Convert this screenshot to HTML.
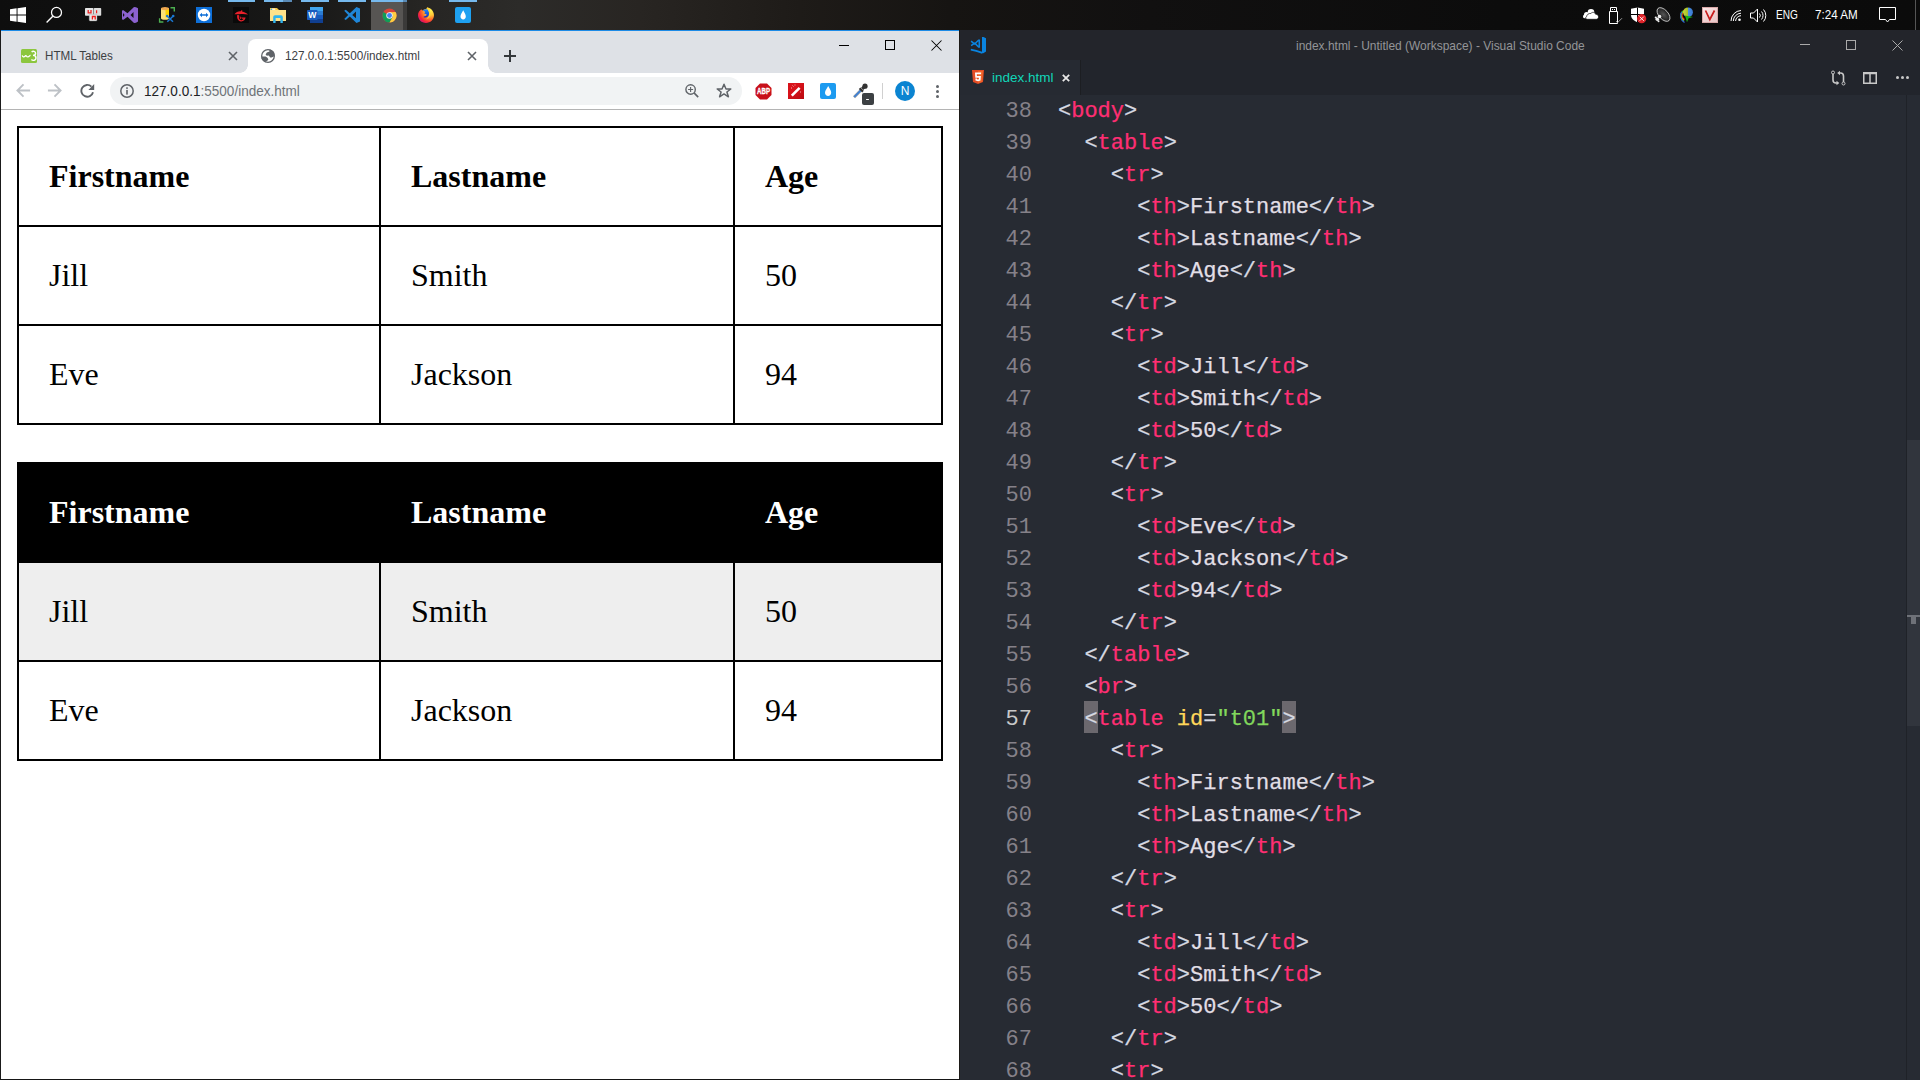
<!DOCTYPE html>
<html><head><meta charset="utf-8"><title>screen</title>
<style>
*{margin:0;padding:0;box-sizing:border-box}
html,body{width:1920px;height:1080px;overflow:hidden;background:#0e0e0e;font-family:"Liberation Sans",sans-serif}
.a{position:absolute}
#tb{left:0;top:0;width:1920px;height:30px;background:linear-gradient(90deg,#0e0e0e 0px,#111 160px,#1a1a19 320px,#262523 420px,#2c2b29 520px,#282522 640px,#1e1b18 800px,#161412 950px,#111010 1150px,#0c0c0c 1500px,#0b0b0b 1920px)}
#cr{left:0;top:30px;width:960px;height:1050px;background:#fff}
#vs{left:960px;top:30px;width:960px;height:1050px;background:#272b33;overflow:hidden}
/* page tables */
.pg{left:1px;top:80px;width:958px;height:969px;background:#fff;font-family:"Liberation Serif",serif;font-size:32px;color:#000}
table{border-collapse:collapse;width:924px;margin-left:16px;table-layout:fixed}
th,td{border:2px solid #000;padding:30px;text-align:left;height:99px}
th{font-weight:bold}
#t01 th{background:#000;color:#fff}
#t01 tr:nth-child(even){background:#eee}
/* code */
.code{left:0;top:0;width:960px;font-family:"Liberation Mono",monospace;font-size:22px;color:#e2dfe6}
.ln{position:absolute;left:0;width:72px;text-align:right;color:#858189;height:32px;line-height:32px}
.cl{position:absolute;left:98px;height:32px;line-height:32px;white-space:pre;-webkit-text-stroke:0.25px currentColor}
.p{color:#d6d9e2}.t{color:#ff2e73}.at{color:#ffd75a}.s{color:#82d85c}
</style></head><body>
<div id="tb" class="a"></div>
<!-- taskbar icons -->
<svg class="a" style="left:10px;top:7px" width="16" height="16" viewBox="0 0 17 17"><path d="M0 2.4L7 1.4V7.9H0ZM8 1.25L17 0V7.9H8ZM0 8.9H7V15.6L0 14.6ZM8 8.9H17V17L8 15.75Z" fill="#fff"/></svg>
<svg class="a" style="left:45px;top:6px" width="18" height="18" viewBox="0 0 18 18"><circle cx="11.5" cy="6.4" r="5" stroke="#fff" stroke-width="1.25" fill="none"/><path d="M7.8 10.2L1.6 16.4" stroke="#fff" stroke-width="1.4"/></svg>
<svg class="a" style="left:84px;top:7px" width="18" height="15" viewBox="0 0 18 15"><rect x="1" y="1" width="8.5" height="7.8" rx="0.8" fill="#e4e4e4"/><rect x="9.8" y="1" width="7.4" height="7.8" rx="0.8" fill="#dcdcdc"/><rect x="5.2" y="7.3" width="7.8" height="6.6" rx="0.8" fill="#e8e8e8" stroke="#999" stroke-width="0.4"/><path d="M4.2 3V5.9H7V3" stroke="#ee2020" stroke-width="1.3" fill="none"/><path d="M12.6 3.3V6.3" stroke="#ee2020" stroke-width="1.2"/><path d="M8.4 12.4V9.5H11.2V12.4" stroke="#ee2020" stroke-width="1.3" fill="none"/></svg>
<svg class="a" style="left:118px;top:4px" width="24" height="24" viewBox="0 0 24 24"><path fill-rule="evenodd" d="M4 6.5L5.5 6.2L9.5 9.2L16 3L18 3.3L20 4.3V17.5L18 18.7L16 19L9.5 12.8L5.5 15.8L4 15.5ZM5 9L5 13L6.6 11ZM12.5 11L15.5 8V14Z" fill="#8c62d0"/></svg>
<svg class="a" style="left:158px;top:6px" width="18" height="18" viewBox="0 0 18 18"><path d="M3 2.2H11V12.2C11 13.2 9.2 13.8 7 13.8C4.8 13.8 3 13.2 3 12.2Z" fill="#fde27a"/><path d="M7.5 2.5H11V8.5L8.5 11.5H7.5Z" fill="#ffd400"/><ellipse cx="7" cy="2.6" rx="4" ry="1.6" fill="#f0a850"/><path d="M12.5 1.8H16.3V5.6M1.6 12.2V16H5.4" stroke="#4caf50" stroke-width="1.4" fill="none"/><path d="M9.3 10.2L15 15.8M15 10.2L9.3 15.8" stroke="#1a78d4" stroke-width="1.5"/><circle cx="9.2" cy="10" r="1.3" fill="#1a78d4"/><circle cx="15.2" cy="10" r="1.3" fill="#1a78d4"/></svg>
<div class="a" style="left:196px;top:7px;width:16px;height:16px;background:#0e6fd8"></div>
<svg class="a" style="left:196px;top:7px" width="16" height="16" viewBox="0 0 16 16"><circle cx="8" cy="8" r="6.2" fill="#fff"/><path d="M3.6 8L6 5.8V7.2H10V5.8L12.4 8L10 10.2V8.8H6V10.2Z" fill="#0e6fd8"/></svg>
<div class="a" style="left:233px;top:7px;width:16px;height:16px;background:#0a0a0a"></div>
<svg class="a" style="left:233px;top:7px" width="16" height="16" viewBox="0 0 16 16"><path d="M1.5 7.2C3 5 5.5 4 8 4.3L8.6 3L9.4 3.6L9 4.4C11.5 4.8 13.5 6 15 7.5C12.5 7 10.5 6.8 8.2 7C5.5 7.2 3.2 7.5 1.5 7.2Z" fill="#e8202a"/><path d="M4.2 8C3.6 11 5 14.2 8 14.4C10.4 14.6 12.3 12.8 12.6 10.6H8L9 11.8H10.6C10.2 12.8 9.2 13.3 8.2 13.2C6.2 13 5.4 10.5 6.2 8.2Z" fill="#e8202a"/><path d="M7 9.5L7.6 11.8" stroke="#e8202a" stroke-width="1"/></svg>
<svg class="a" style="left:270px;top:7px" width="17" height="16" viewBox="0 0 17 16"><path d="M0 1H7L9 3H16V14H0Z" fill="#f6c744"/><rect x="1.3" y="1.6" width="4" height="1.2" fill="#fff"/><circle cx="1.5" cy="2.2" r="0.8" fill="#35a8e8"/><rect x="0" y="3" width="16" height="11" fill="#ffe28a"/><path d="M3.2 16V10Q3.2 8.2 5 8.2H11Q12.8 8.2 12.8 10V16H10.4V11H5.6V16Z" fill="#31b4ee"/></svg>
<svg class="a" style="left:307px;top:6px" width="17" height="18" viewBox="0 0 17 18"><rect x="3" y="1" width="13" height="4" fill="#41a5ee"/><rect x="3" y="5" width="13" height="4" fill="#2b7cd3"/><rect x="3" y="9" width="13" height="4" fill="#185abd"/><rect x="3" y="13" width="13" height="4" fill="#103f91"/><rect x="0" y="4" width="10.5" height="10" rx="0.8" fill="#1a5cc0"/><text x="5.25" y="12.3" text-anchor="middle" font-family="Liberation Sans" font-weight="bold" font-size="8.6" fill="#fff">W</text></svg>
<svg class="a" style="left:340px;top:4px" width="24" height="24" viewBox="0 0 24 24"><path fill-rule="evenodd" d="M4.2 6.8L5.8 5.8L9.8 9.2L16.5 3L20 4.5V17.5L16.5 19L9.8 12.6L5.8 16L4.2 15L8.2 10.9ZM16 7.5V14.3L12.2 10.9Z" fill="#1f86d8"/></svg>
<div class="a" style="left:371px;top:2px;width:32px;height:28px;background:#575553"></div>
<div class="a" style="left:403px;top:2px;width:4px;height:28px;background:#3b3a39"></div>
<svg class="a" style="left:382px;top:8px" width="15" height="15" viewBox="0 0 16 16"><circle cx="8" cy="8" r="7.5" fill="#db4437"/><path d="M8 8L1.5 4.25A7.5 7.5 0 0 0 8 15.5L11.75 9Z" fill="#0f9d58"/><path d="M8 8L11.75 9L8 15.5A7.5 7.5 0 0 0 14.5 4.25L8 4.5Z" fill="#ffcd40"/><circle cx="8" cy="8" r="3.4" fill="#f1f1f1"/><circle cx="8" cy="8" r="2.6" fill="#4285f4"/></svg>
<svg class="a" style="left:417px;top:6px" width="18" height="18" viewBox="0 0 18 18"><defs><radialGradient id="ff" cx="0.78" cy="0.22" r="0.95"><stop offset="0" stop-color="#fff44f"/><stop offset="0.3" stop-color="#ffc93a"/><stop offset="0.58" stop-color="#ff6a2a"/><stop offset="0.8" stop-color="#f5223a"/><stop offset="1" stop-color="#c8128a"/></radialGradient><linearGradient id="fb" x1="0" y1="0" x2="0" y2="1"><stop offset="0" stop-color="#1e8bff"/><stop offset="1" stop-color="#1a2fb8"/></linearGradient></defs><path d="M4.3 3.2L5.2 4.6C6.3 3.6 7.8 3 9.2 2.9L10.2 1.2C14 2 17 5.2 17 9.3C17 13.7 13.4 17 9 17C4.6 17 1 13.4 1 9C1 6.7 2.3 4.5 4.3 3.2Z" fill="url(#ff)"/><path d="M6 4.3C7.5 3.2 9.5 3 10.6 3.6C11.8 5 12.6 7.2 11.8 9.2C11 11 9 11.8 7.2 11.5C6.4 11.2 6.2 10.6 7 10.4C8.5 10.2 9.8 9.6 9.6 8.6C9.4 7.8 8 8 7.2 7.4C7.8 6.6 8.2 6 7.8 5.4C7.2 5.2 6.6 5.2 6 4.3Z" fill="url(#fb)"/><path d="M10.2 1.3C12.3 3 13.6 5.5 13.4 8.5C13.2 11.5 11 13.2 8.5 13.2C10.8 12.6 12.3 10.8 12.2 8.4C12.1 5.8 11.2 3.4 10.2 1.3Z" fill="#ffd43a" opacity="0.85"/></svg>
<div class="a" style="left:455px;top:7px;width:16px;height:16px;background:#1ea1f1;border-radius:2px"></div>
<svg class="a" style="left:455px;top:7px" width="16" height="16" viewBox="0 0 16 16"><path d="M8.2 3.2C7 5.8 5.5 7.5 5.5 9.5C5.5 11.2 6.7 12.4 8.2 12.4C9.7 12.4 10.8 11.2 10.8 9.5C10.8 7.5 9.4 5.8 8.2 3.2Z" fill="#fff"/></svg>
<div class="a" style="left:228px;top:0;width:27px;height:2px;background:#76b9ed"></div>
<div class="a" style="left:264px;top:0;width:28px;height:2px;background:#76b9ed"></div>
<div class="a" style="left:283px;top:0;width:9px;height:2px;background:#5a8ab5"></div>
<div class="a" style="left:301px;top:0;width:28px;height:2px;background:#76b9ed"></div>
<div class="a" style="left:338px;top:0;width:28px;height:2px;background:#76b9ed"></div>
<div class="a" style="left:371px;top:0;width:32px;height:2px;background:#76b9ed"></div>
<div class="a" style="left:403px;top:0;width:4px;height:2px;background:#5a8ab5"></div>
<div class="a" style="left:449px;top:0;width:28px;height:2px;background:#76b9ed"></div>
<!-- tray -->
<svg class="a" style="left:1582px;top:8px" width="17" height="12" viewBox="0 0 17 12"><g fill="#fff"><circle cx="9" cy="4.3" r="3.3"/><circle cx="4.6" cy="6.6" r="2.6"/><rect x="1" y="6.5" width="8" height="3.8" rx="1.9"/></g><g fill="#fff" stroke="#0c0c0c" stroke-width="0.7"><path d="M5 11.3C3.5 11.3 3 9.2 4.6 8.6C4.8 6.6 6.6 5.2 8.8 5.5C9.8 3.9 12.6 3.8 13.6 6.2C15.6 6.1 16.8 7.6 16.5 9.3C16.3 10.6 15.4 11.3 14.3 11.3Z"/></g></svg>
<svg class="a" style="left:1608px;top:6px" width="16" height="18" viewBox="0 0 16 18"><path d="M2.5 1.5H8.5V5.5H2.5ZM1.5 5.5H9.5V17.5H1.5Z" stroke="#fff" stroke-width="1" fill="none"/><rect x="4" y="3" width="1" height="1" fill="#fff"/><rect x="6" y="3" width="1" height="1" fill="#fff"/><path d="M8 15.2L9.6 16.6L14 12.2" stroke="#aaa" stroke-width="0.9" fill="none"/></svg>
<svg class="a" style="left:1630px;top:7px" width="17" height="17" viewBox="0 0 17 17"><path d="M1 1.8L7.5 0.6L14 1.8V8C14 11.5 11 13.8 7.5 15.2C4 13.8 1 11.5 1 8Z" fill="#fff"/><path d="M7.5 0.5V15.5M1 7.5H14" stroke="#000" stroke-width="1"/><circle cx="11.7" cy="11.7" r="4.6" fill="#e0242a"/><path d="M9.6 9.6L13.8 13.8M13.8 9.6L9.6 13.8" stroke="#fff" stroke-width="0.9"/></svg>
<svg class="a" style="left:1653px;top:6px" width="18" height="17" viewBox="0 0 18 17"><defs><radialGradient id="dg" cx="0.5" cy="0.5" r="0.6"><stop offset="0" stop-color="#555"/><stop offset="1" stop-color="#111"/></radialGradient></defs><ellipse cx="10.5" cy="8.5" rx="4.6" ry="8.2" transform="rotate(-42 10.5 8.5)" stroke="#ddd" stroke-width="0.8" fill="url(#dg)"/><g fill="#eee"><circle cx="6.5" cy="10.5" r="1.8"/><circle cx="4.3" cy="13.3" r="1.8"/><circle cx="2.8" cy="11.5" r="1.1"/><circle cx="5.5" cy="15.2" r="1"/></g></svg>
<svg class="a" style="left:1677px;top:7px" width="17" height="16" viewBox="0 0 17 16"><defs><linearGradient id="ig" x1="0" y1="0" x2="1" y2="0"><stop offset="0" stop-color="#c8d838"/><stop offset="0.45" stop-color="#a8c030"/><stop offset="0.55" stop-color="#4a90e0"/><stop offset="1" stop-color="#3a78d0"/></linearGradient></defs><path d="M8 4.2A4.5 4.5 0 0 0 7.5 12.5" stroke="#e03818" stroke-width="1.2" fill="none"/><path d="M6.8 3.8A5.6 5.6 0 0 0 7 13.6" stroke="#e8d020" stroke-width="1.2" fill="none"/><path d="M5.8 4A6.8 6.8 0 0 0 7 14.6" stroke="#38c030" stroke-width="1.2" fill="none"/><path d="M4.6 5A7.8 7.8 0 0 0 7.5 15.5" stroke="#3060d8" stroke-width="1.2" fill="none"/><circle cx="11" cy="5.3" r="4.9" fill="url(#ig)"/><path d="M8 8.5L16 10L11.6 11.2L10 15.2Z" fill="#18b018"/></svg>
<div class="a" style="left:1702px;top:7px;width:16px;height:16px;background:linear-gradient(135deg,#fbe8e8,#f0d0d0 60%,#e8c8c8);border:1px solid #d8a8a8"></div>
<svg class="a" style="left:1702px;top:7px" width="16" height="16" viewBox="0 0 16 16"><path d="M3.5 3.5L7.8 12.5L12.5 3.5" stroke="#c81c1c" stroke-width="1.7" fill="none"/></svg>
<svg class="a" style="left:1730px;top:9px" width="12" height="13" viewBox="0 0 12 13"><path d="M1 12A10.5 10.5 0 0 1 11 1.5M3.3 12A8 8 0 0 1 11 4.2M5.6 12A5.5 5.5 0 0 1 11 6.7" stroke="#fff" stroke-width="1" fill="none"/><circle cx="9.5" cy="10.8" r="1.3" fill="#fff"/></svg>
<svg class="a" style="left:1750px;top:8px" width="17" height="15" viewBox="0 0 17 15"><path d="M0.5 5H3.5L7.5 1V14L3.5 10H0.5Z" stroke="#fff" stroke-width="1" fill="none"/><path d="M9.5 5.5A3 3 0 0 1 9.5 9.5M11.5 3.5A6 6 0 0 1 11.5 11.5M13.5 1.5A9 9 0 0 1 13.5 13.5" stroke="#fff" stroke-width="1" fill="none"/></svg>
<div class="a" style="left:1776px;top:7px;font-size:12px;color:#fff;line-height:17px;white-space:nowrap;transform:scaleX(0.84);transform-origin:0 0">ENG</div>
<div class="a" style="left:1815px;top:7px;font-size:12px;color:#fff;line-height:17px;white-space:nowrap;transform:scaleX(0.97);transform-origin:0 0">7:24 AM</div>
<svg class="a" style="left:1879px;top:7px" width="17" height="16" viewBox="0 0 17 16"><path d="M0.5 0.5H16.5V12.5H10.5L8.5 15L6.5 12.5H0.5Z" stroke="#fff" stroke-width="1" fill="none"/></svg>
<div class="a" style="left:1915px;top:0;width:1px;height:30px;background:#555"></div>

<div id="cr" class="a">
  <div class="a" style="left:0;top:0;width:1px;height:1050px;background:#1a1a1a"></div>
  <div class="a" style="left:959px;top:0;width:1px;height:1050px;background:#1d1a17"></div>
  <div class="a" style="left:0;top:1049px;width:960px;height:1px;background:#161616;z-index:5"></div>
  <div class="a" style="left:1px;top:0;width:958px;height:1px;background:#1c8ae6"></div>
  <div class="a" style="left:1px;top:1px;width:958px;height:42px;background:#dee1e6"></div>
  <div class="a" style="left:1px;top:43px;width:958px;height:36px;background:#fff"></div>
  <div class="a" style="left:1px;top:79px;width:958px;height:1px;background:#b4b4b4"></div>

  <!-- tab strip content (coords relative to #cr, top=30) -->
  <svg class="a" style="left:21px;top:19px" width="16" height="14" viewBox="0 0 16 14"><rect width="16" height="14" rx="1.5" fill="#8cc63e"/><path d="M1.2 6.3C1.6 8 3 8.3 4 7.3C4.6 6.7 5 6.3 5.4 7C6 8.2 7.5 8.2 8.3 7.2C8.7 6.7 9 6.2 9.6 6.3" stroke="#fff" stroke-width="1.3" fill="none"/><path d="M10.6 3C11.8 1.8 14.6 2.2 14.6 4.3C14.6 5.8 13.2 6.4 12 6.4C13.6 6.4 15 7.2 15 9C15 11.6 11.8 12 10.4 10.6" stroke="#fff" stroke-width="1.4" fill="none"/></svg>
  
  <div class="a" style="left:45px;top:17px;font-size:12.5px;color:#3c4043;line-height:18px;white-space:nowrap;transform:scaleX(0.93);transform-origin:0 0">HTML Tables</div>
  <svg class="a" style="left:228px;top:21px" width="10" height="10" viewBox="0 0 10 10"><path d="M1 1L9 9M9 1L1 9" stroke="#5f6368" stroke-width="1.6"/></svg>
  <!-- active tab -->
  <div class="a" style="left:248px;top:9px;width:240px;height:34px;background:#fff;border-radius:8px 8px 0 0"></div>
  <div class="a" style="left:240px;top:35px;width:8px;height:8px;background:radial-gradient(circle at 0 0,#dee1e6 7.5px,#fff 8px)"></div>
  <div class="a" style="left:488px;top:35px;width:8px;height:8px;background:radial-gradient(circle at 100% 0,#dee1e6 7.5px,#fff 8px)"></div>
  <svg class="a" style="left:261px;top:19px" width="14" height="14" viewBox="0 0 14 14"><circle cx="7" cy="7" r="6.35" fill="none" stroke="#5f6368" stroke-width="1.3"/><path d="M8.3 0.6L8.5 2.5L5.8 3.6L4.6 5.6L5.8 6.8L7.8 6.6L9.2 8.4L10.6 8.6L12.8 7.4L13.6 6L13 3L10.5 1Z" fill="#5f6368"/><path d="M0.5 7.6L4.5 7.6L6.2 8.4L7.4 10.2L6.4 11.8L4.4 12.4L4.3 13.6L2 11.8L0.6 9.5Z" fill="#5f6368"/></svg>
  <div class="a" style="left:285px;top:17px;font-size:12.5px;color:#3c4043;line-height:18px;white-space:nowrap;transform:scaleX(0.937);transform-origin:0 0">127.0.0.1:5500/index.html</div>
  <svg class="a" style="left:467px;top:21px" width="10" height="10" viewBox="0 0 10 10"><path d="M1 1L9 9M9 1L1 9" stroke="#5f6368" stroke-width="1.6"/></svg>
  <svg class="a" style="left:504px;top:20px" width="12" height="12" viewBox="0 0 12 12"><path d="M6 0V12M0 6H12" stroke="#33373a" stroke-width="2"/></svg>
  <!-- window controls -->
  <div class="a" style="left:839px;top:15px;width:10px;height:1px;background:#000"></div>
  <div class="a" style="left:885px;top:10px;width:10px;height:10px;border:1px solid #000"></div>
  <svg class="a" style="left:931px;top:10px" width="11" height="11" viewBox="0 0 11 11"><path d="M0.5 0.5L10.5 10.5M10.5 0.5L0.5 10.5" stroke="#000" stroke-width="1.05"/></svg>
  <!-- toolbar -->
  <svg class="a" style="left:16px;top:53px" width="15" height="15" viewBox="0 0 16 16"><path d="M15 8H2M8 1.5L1.5 8L8 14.5" stroke="#bdc1c6" stroke-width="2" fill="none"/></svg>
  <svg class="a" style="left:47px;top:53px" width="15" height="15" viewBox="0 0 16 16"><path d="M1 8H14M8 1.5L14.5 8L8 14.5" stroke="#bdc1c6" stroke-width="2" fill="none"/></svg>
  <svg class="a" style="left:80px;top:53px" width="15" height="15" viewBox="0 0 15 15"><path d="M13 9.2A5.9 5.9 0 1 1 11.4 3.6" stroke="#5f6368" stroke-width="1.9" fill="none"/><path d="M8.4 6.9H14.2V1.1Z" fill="#5f6368"/></svg>
  <div class="a" style="left:110px;top:47px;width:632px;height:28px;background:#f1f3f4;border-radius:14px"></div>
  <svg class="a" style="left:120px;top:54px" width="14" height="14" viewBox="0 0 14 14"><circle cx="7" cy="7" r="6.2" stroke="#5f6368" stroke-width="1.5" fill="none"/><rect x="6.2" y="5.9" width="1.6" height="4.7" fill="#5f6368"/><rect x="6.2" y="3.3" width="1.6" height="1.6" fill="#5f6368"/></svg>
  <div class="a" style="left:144px;top:52px;font-size:14.5px;color:#202124;line-height:18px;white-space:nowrap;transform:scaleX(0.934);transform-origin:0 0">127.0.0.1<span style="color:#6f7378">:5500/index.html</span></div>
  <svg class="a" style="left:685px;top:54px" width="15" height="15" viewBox="0 0 15 15"><circle cx="5.6" cy="5.5" r="4.7" stroke="#5f6368" stroke-width="1.4" fill="none"/><path d="M9 8.9L13.2 13.1" stroke="#5f6368" stroke-width="1.6"/><path d="M5.6 3V8M3.1 5.5H8.1" stroke="#5f6368" stroke-width="1.1"/></svg>
  <svg class="a" style="left:716px;top:53px" width="16" height="15" viewBox="0 0 16 15"><path d="M8 1.3L10 6H14.8L10.9 9L12.4 13.8L8 10.9L3.6 13.8L5.1 9L1.2 6H6Z" stroke="#5f6368" stroke-width="1.5" fill="none" stroke-linejoin="round"/></svg>
  <svg class="a" style="left:755px;top:53px" width="17" height="17" viewBox="0 0 17 17"><path d="M5 0.5H12L16.5 5V12L12 16.5H5L0.5 12V5Z" fill="#c8101a"/><text x="2" y="11.4" textLength="13" lengthAdjust="spacingAndGlyphs" font-family="Liberation Sans" font-weight="bold" font-size="8.4" fill="#fff" stroke="#fff" stroke-width="0.3">ABP</text></svg>
  <div class="a" style="left:788px;top:53px;width:16px;height:16px;background:linear-gradient(135deg,#d8121a 40%,#b80a10)"></div>
  <svg class="a" style="left:788px;top:53px" width="16" height="16" viewBox="0 0 16 16"><path d="M3.8 12.6L11.6 4.8" stroke="#fff" stroke-width="2.6"/><path d="M4.5 2.5L5.5 3.5M7 1.5V2.5M3 5H4M12.5 8.5V9.5" stroke="#f4c0c0" stroke-width="0.9"/></svg>
  <div class="a" style="left:820px;top:53px;width:16px;height:16px;background:#1d9bf0;border-radius:2px"></div>
  <svg class="a" style="left:820px;top:53px" width="16" height="16" viewBox="0 0 16 16"><path d="M8.2 3C7 5.6 5 7.4 5 9.8C5 11.6 6.4 13 8.1 13C9.8 13 11.2 11.6 11.2 9.8C11.2 7.4 9.4 5.6 8.2 3Z" fill="#fff"/></svg>
  <svg class="a" style="left:852px;top:53px" width="17" height="16" viewBox="0 0 17 16"><path d="M2 14.2L9.2 7" stroke="#9aa0a6" stroke-width="3"/><path d="M2.3 13.9L8.8 7.4" stroke="#3b7fd6" stroke-width="1.6"/><path d="M7.6 5.2L11 8.6" stroke="#333" stroke-width="2.2"/><path d="M10.2 5.8L12.2 3.8" stroke="#333" stroke-width="3.2"/><circle cx="13" cy="3.2" r="2.6" fill="#333"/></svg>
  <div class="a" style="left:862px;top:63px;width:12px;height:12px;background:#3c4043;border-radius:2px"></div>
  <div class="a" style="left:866px;top:68.5px;width:3px;height:1.5px;background:#fff;border-radius:1px"></div>
  <div class="a" style="left:882px;top:53px;width:1px;height:16px;background:#d0d0d0"></div>
  <div class="a" style="left:895px;top:51px;width:20px;height:20px;background:#0b84d1;border-radius:50%;color:#fff;font-size:12px;line-height:20px;text-align:center">N</div>
  <div class="a" style="left:936px;top:55px;width:3px;height:3px;background:#5f6368;border-radius:50%"></div>
  <div class="a" style="left:936px;top:60px;width:3px;height:3px;background:#5f6368;border-radius:50%"></div>
  <div class="a" style="left:936px;top:65px;width:3px;height:3px;background:#5f6368;border-radius:50%"></div>
  <div class="a pg">
    <table style="margin-top:16px">
      <colgroup><col style="width:362px"><col style="width:354px"><col style="width:208px"></colgroup>
      <tr><th>Firstname</th><th>Lastname</th><th>Age</th></tr>
      <tr><td>Jill</td><td>Smith</td><td>50</td></tr>
      <tr><td>Eve</td><td>Jackson</td><td>94</td></tr>
    </table>
    <table id="t01" style="margin-top:37px">
      <colgroup><col style="width:362px"><col style="width:354px"><col style="width:208px"></colgroup>
      <tr><th>Firstname</th><th>Lastname</th><th>Age</th></tr>
      <tr><td>Jill</td><td>Smith</td><td>50</td></tr>
      <tr><td>Eve</td><td>Jackson</td><td>94</td></tr>
    </table>
  </div>
</div>
<div id="vs" class="a">
  <div class="a" style="left:0;top:0;width:960px;height:30px;background:#23252b"></div>
  <div class="a" style="left:0;top:30px;width:960px;height:35px;background:#22252c"></div>
  <div class="a" style="left:0;top:30px;width:120px;height:35px;background:#262a32"></div>
  <div class="a" style="left:120px;top:30px;width:1px;height:35px;background:#1c1e22"></div>

  <!-- VS Code title bar -->
  <svg class="a" style="left:6px;top:4px" width="24" height="24" viewBox="0 0 24 24"><path d="M5.1 7.2L9 10.3M5.1 11.6L9 8.8" stroke="#0a84e0" stroke-width="1.5"/><path fill-rule="evenodd" d="M8 9.5L12.3 5.4H14V13.8H12.3ZM10.2 9.5L12.5 7.3V11.8Z" fill="#0a84e0"/><path d="M16 3L17.5 3L20 4.3V17.6L17.3 19.2L16 19Z" fill="#0a84e0"/><path d="M4.8 15.6C9 16.2 13 17.5 16.5 18.8" stroke="#0a84e0" stroke-width="1.9" fill="none"/></svg>
  <div class="a" style="left:336px;top:7px;font-size:13px;color:#949598;line-height:18px;white-space:nowrap;transform:scaleX(0.92);transform-origin:0 0">index.html - Untitled (Workspace) - Visual Studio Code</div>
  <div class="a" style="left:840px;top:14px;width:10px;height:1px;background:#aaa"></div>
  <div class="a" style="left:886px;top:10px;width:10px;height:10px;border:1px solid #aaa"></div>
  <svg class="a" style="left:932px;top:10px" width="11" height="11" viewBox="0 0 11 11"><path d="M0.5 0.5L10.5 10.5M10.5 0.5L0.5 10.5" stroke="#aaa" stroke-width="1"/></svg>
  <!-- tab -->
  <svg class="a" style="left:12px;top:40px" width="12" height="14" viewBox="0 0 12 14"><path d="M0 0H12L11 12L6 14L1 12Z" fill="#e44d26"/><path d="M6 1V13L10 11.8L10.9 1Z" fill="#f16529"/><path d="M3 2.5H9.2L9 4.3H4.8L4.9 6H8.9L8.5 10.4L6 11.2L3.5 10.4L3.4 8.6H5L5.1 9.3L6 9.6L6.9 9.3L7 7.7H3.3Z" fill="#fff"/></svg>
  <div class="a" style="left:32px;top:39px;font-size:13.5px;color:#11d6b8;line-height:18px;white-space:nowrap">index.html</div>
  <svg class="a" style="left:102px;top:44px" width="8" height="8" viewBox="0 0 8 8"><path d="M0.8 0.8L7.2 7.2M7.2 0.8L0.8 7.2" stroke="#e8e8e8" stroke-width="1.8"/></svg>
  <!-- editor actions -->
  <svg class="a" style="left:871px;top:40px" width="15" height="17" viewBox="0 0 15 17"><circle cx="2" cy="2.5" r="1.5" stroke="#c8c8c8" stroke-width="1" fill="none"/><circle cx="12.5" cy="13.5" r="1.5" stroke="#c8c8c8" stroke-width="1" fill="none"/><path d="M2 4V10C2 12 3 13 5 13H6" stroke="#c8c8c8" stroke-width="1.6" fill="none"/><path d="M5.5 10.8L8.3 13L5.5 15.2Z" fill="#c8c8c8"/><path d="M12.5 12V6C12.5 4 11.5 3 9.5 3H8.5" stroke="#c8c8c8" stroke-width="1.6" fill="none"/><path d="M9 0.8L6.2 3L9 5.2Z" fill="#c8c8c8"/></svg>
  <svg class="a" style="left:903px;top:42px" width="14" height="12" viewBox="0 0 14 12"><rect x="0.75" y="0.75" width="12.5" height="10.5" stroke="#c8c8c8" stroke-width="1.5" fill="none"/><path d="M7 1V11M1 1.6H13" stroke="#c8c8c8" stroke-width="1.5"/></svg>
  <div class="a" style="left:936px;top:46px;width:3px;height:3px;border-radius:50%;background:#c8c8c8"></div>
  <div class="a" style="left:941px;top:46px;width:3px;height:3px;border-radius:50%;background:#c8c8c8"></div>
  <div class="a" style="left:946px;top:46px;width:3px;height:3px;border-radius:50%;background:#c8c8c8"></div>
  <!-- scrollbar -->
  <div class="a" style="left:946px;top:65px;width:1px;height:985px;background:#1f2228"></div>
  <div class="a" style="left:947px;top:410px;width:13px;height:286px;background:#31353d"></div>
  <div class="a" style="left:947px;top:585px;width:13px;height:2px;background:#6e7178"></div>
  <div class="a" style="left:951px;top:587px;width:5px;height:7px;background:#6e7178"></div>
  <!-- bracket match boxes line 57 -->
  <div class="a" style="left:124px;top:671px;width:14px;height:32px;background:#6b686e"></div>
  <div class="a" style="left:322px;top:671px;width:14px;height:32px;background:#6b686e"></div>
  <div class="a code" id="code">
<div class="ln" style="top:66px">38</div>
<div class="cl" style="top:66px"><span class="p">&lt;</span><span class="t">body</span><span class="p">&gt;</span></div>
<div class="ln" style="top:98px">39</div>
<div class="cl" style="top:98px">  <span class="p">&lt;</span><span class="t">table</span><span class="p">&gt;</span></div>
<div class="ln" style="top:130px">40</div>
<div class="cl" style="top:130px">    <span class="p">&lt;</span><span class="t">tr</span><span class="p">&gt;</span></div>
<div class="ln" style="top:162px">41</div>
<div class="cl" style="top:162px">      <span class="p">&lt;</span><span class="t">th</span><span class="p">&gt;</span>Firstname<span class="p">&lt;/</span><span class="t">th</span><span class="p">&gt;</span></div>
<div class="ln" style="top:194px">42</div>
<div class="cl" style="top:194px">      <span class="p">&lt;</span><span class="t">th</span><span class="p">&gt;</span>Lastname<span class="p">&lt;/</span><span class="t">th</span><span class="p">&gt;</span></div>
<div class="ln" style="top:226px">43</div>
<div class="cl" style="top:226px">      <span class="p">&lt;</span><span class="t">th</span><span class="p">&gt;</span>Age<span class="p">&lt;/</span><span class="t">th</span><span class="p">&gt;</span></div>
<div class="ln" style="top:258px">44</div>
<div class="cl" style="top:258px">    <span class="p">&lt;/</span><span class="t">tr</span><span class="p">&gt;</span></div>
<div class="ln" style="top:290px">45</div>
<div class="cl" style="top:290px">    <span class="p">&lt;</span><span class="t">tr</span><span class="p">&gt;</span></div>
<div class="ln" style="top:322px">46</div>
<div class="cl" style="top:322px">      <span class="p">&lt;</span><span class="t">td</span><span class="p">&gt;</span>Jill<span class="p">&lt;/</span><span class="t">td</span><span class="p">&gt;</span></div>
<div class="ln" style="top:354px">47</div>
<div class="cl" style="top:354px">      <span class="p">&lt;</span><span class="t">td</span><span class="p">&gt;</span>Smith<span class="p">&lt;/</span><span class="t">td</span><span class="p">&gt;</span></div>
<div class="ln" style="top:386px">48</div>
<div class="cl" style="top:386px">      <span class="p">&lt;</span><span class="t">td</span><span class="p">&gt;</span>50<span class="p">&lt;/</span><span class="t">td</span><span class="p">&gt;</span></div>
<div class="ln" style="top:418px">49</div>
<div class="cl" style="top:418px">    <span class="p">&lt;/</span><span class="t">tr</span><span class="p">&gt;</span></div>
<div class="ln" style="top:450px">50</div>
<div class="cl" style="top:450px">    <span class="p">&lt;</span><span class="t">tr</span><span class="p">&gt;</span></div>
<div class="ln" style="top:482px">51</div>
<div class="cl" style="top:482px">      <span class="p">&lt;</span><span class="t">td</span><span class="p">&gt;</span>Eve<span class="p">&lt;/</span><span class="t">td</span><span class="p">&gt;</span></div>
<div class="ln" style="top:514px">52</div>
<div class="cl" style="top:514px">      <span class="p">&lt;</span><span class="t">td</span><span class="p">&gt;</span>Jackson<span class="p">&lt;/</span><span class="t">td</span><span class="p">&gt;</span></div>
<div class="ln" style="top:546px">53</div>
<div class="cl" style="top:546px">      <span class="p">&lt;</span><span class="t">td</span><span class="p">&gt;</span>94<span class="p">&lt;/</span><span class="t">td</span><span class="p">&gt;</span></div>
<div class="ln" style="top:578px">54</div>
<div class="cl" style="top:578px">    <span class="p">&lt;/</span><span class="t">tr</span><span class="p">&gt;</span></div>
<div class="ln" style="top:610px">55</div>
<div class="cl" style="top:610px">  <span class="p">&lt;/</span><span class="t">table</span><span class="p">&gt;</span></div>
<div class="ln" style="top:642px">56</div>
<div class="cl" style="top:642px">  <span class="p">&lt;</span><span class="t">br</span><span class="p">&gt;</span></div>
<div class="ln" style="top:674px;color:#c8c8c8">57</div>
<div class="cl" style="top:674px">  <span class="p">&lt;</span><span class="t">table</span> <span class="at">id</span><span class="p">=</span><span class="s">"t01"</span><span class="p">&gt;</span></div>
<div class="ln" style="top:706px">58</div>
<div class="cl" style="top:706px">    <span class="p">&lt;</span><span class="t">tr</span><span class="p">&gt;</span></div>
<div class="ln" style="top:738px">59</div>
<div class="cl" style="top:738px">      <span class="p">&lt;</span><span class="t">th</span><span class="p">&gt;</span>Firstname<span class="p">&lt;/</span><span class="t">th</span><span class="p">&gt;</span></div>
<div class="ln" style="top:770px">60</div>
<div class="cl" style="top:770px">      <span class="p">&lt;</span><span class="t">th</span><span class="p">&gt;</span>Lastname<span class="p">&lt;/</span><span class="t">th</span><span class="p">&gt;</span></div>
<div class="ln" style="top:802px">61</div>
<div class="cl" style="top:802px">      <span class="p">&lt;</span><span class="t">th</span><span class="p">&gt;</span>Age<span class="p">&lt;/</span><span class="t">th</span><span class="p">&gt;</span></div>
<div class="ln" style="top:834px">62</div>
<div class="cl" style="top:834px">    <span class="p">&lt;/</span><span class="t">tr</span><span class="p">&gt;</span></div>
<div class="ln" style="top:866px">63</div>
<div class="cl" style="top:866px">    <span class="p">&lt;</span><span class="t">tr</span><span class="p">&gt;</span></div>
<div class="ln" style="top:898px">64</div>
<div class="cl" style="top:898px">      <span class="p">&lt;</span><span class="t">td</span><span class="p">&gt;</span>Jill<span class="p">&lt;/</span><span class="t">td</span><span class="p">&gt;</span></div>
<div class="ln" style="top:930px">65</div>
<div class="cl" style="top:930px">      <span class="p">&lt;</span><span class="t">td</span><span class="p">&gt;</span>Smith<span class="p">&lt;/</span><span class="t">td</span><span class="p">&gt;</span></div>
<div class="ln" style="top:962px">66</div>
<div class="cl" style="top:962px">      <span class="p">&lt;</span><span class="t">td</span><span class="p">&gt;</span>50<span class="p">&lt;/</span><span class="t">td</span><span class="p">&gt;</span></div>
<div class="ln" style="top:994px">67</div>
<div class="cl" style="top:994px">    <span class="p">&lt;/</span><span class="t">tr</span><span class="p">&gt;</span></div>
<div class="ln" style="top:1026px">68</div>
<div class="cl" style="top:1026px">    <span class="p">&lt;</span><span class="t">tr</span><span class="p">&gt;</span></div>
</div>
</div>
</body></html>
